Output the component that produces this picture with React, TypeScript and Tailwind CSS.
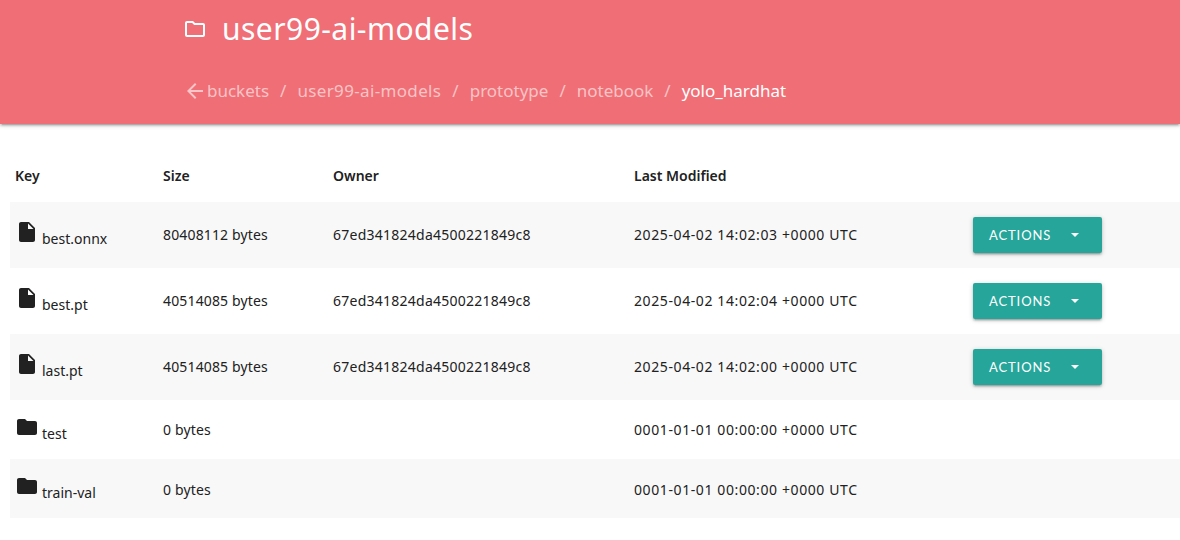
import React from "react";

const File = () => (
  <svg width="24" height="24" viewBox="0 0 24 24" className="fill-[#212121] shrink-0"><path d="M6 2c-1.1 0-2 .9-2 2v16c0 1.1.9 2 2 2h12c1.1 0 2-.9 2-2V8l-6-6H6zm7 7V3.5L18.5 9H13z" /></svg>
);
const Folder = () => (
  <svg width="24" height="24" viewBox="0 0 24 24" className="fill-[#212121] shrink-0"><path d="M10 4H4c-1.1 0-2 .9-2 2v12c0 1.1.9 2 2 2h16c1.1 0 2-.9 2-2V8c0-1.1-.9-2-2-2h-8l-2-2z" /></svg>
);
const FolderLine = () => (
  <svg width="24" height="24" viewBox="0 0 24 24" className="fill-white shrink-0"><path d="M9.17 6l2 2H20v10H4V6h5.17M10 4H4c-1.1 0-1.99.9-1.99 2L2 18c0 1.1.9 2 2 2h16c1.1 0 2-.9 2-2V8c0-1.1-.9-2-2-2h-8l-2-2z" /></svg>
);
const Back = () => (
  <svg width="24" height="24" viewBox="0 0 24 24" className="fill-white/60 shrink-0"><path d="M20 11H7.83l5.59-5.59L12 4l-8 8 8 8 1.41-1.41L7.83 13H20v-2z" /></svg>
);

const rows = [
  { name: "best.onnx", size: "80408112 bytes", owner: "67ed341824da4500221849c8", date: "2025-04-02 14:02:03 +0000 UTC", file: true, pad: "pb-[2px]" },
  { name: "best.pt", size: "40514085 bytes", owner: "67ed341824da4500221849c8", date: "2025-04-02 14:02:04 +0000 UTC", file: true, pad: "pb-[2px]" },
  { name: "last.pt", size: "40514085 bytes", owner: "67ed341824da4500221849c8", date: "2025-04-02 14:02:00 +0000 UTC", file: true, pad: "pb-[2px]" },
  { name: "test", size: "0 bytes", owner: "", date: "0001-01-01 00:00:00 +0000 UTC", file: false, pad: "" },
  { name: "train-val", size: "0 bytes", owner: "", date: "0001-01-01 00:00:00 +0000 UTC", file: false, pad: "pt-[1px]" },
];

export default function App() {
  return (
    <div className="w-[1180px] h-[540px] overflow-hidden bg-white text-[#212121] font-['Noto_Sans',sans-serif]">
      <header className="h-[124px] bg-[#f06e75] pl-[183px] shadow-[0_2px_2px_rgba(0,0,0,0.14),0_3px_1px_-2px_rgba(0,0,0,0.12),0_1px_5px_rgba(0,0,0,0.2)]">
        <div className="flex items-center h-[57px] text-white">
          <FolderLine />
          <span className="ml-[15px] text-[30px] tracking-[0.45px] leading-[57px]">user99-ai-models</span>
        </div>
        <nav className="flex items-center h-[67px] text-[17px] text-white/60">
          <Back />
          <span>buckets</span>
          <span className="mx-[11px]">/</span>
          <span className="tracking-[0.35px]">user99-ai-models</span>
          <span className="mx-[11px]">/</span>
          <span>prototype</span>
          <span className="mx-[11px]">/</span>
          <span>notebook</span>
          <span className="mx-[11px]">/</span>
          <span className="text-white">yolo_hardhat</span>
        </nav>
      </header>
      <div className="pl-[10px] pt-[21px]">
        <table className="w-[1170px] table-fixed border-collapse text-[14px]">
          <colgroup>
            <col className="w-[148px]" />
            <col className="w-[170px]" />
            <col className="w-[301px]" />
            <col className="w-[339px]" />
            <col />
          </colgroup>
          <thead>
            <tr className="h-[57px] text-left">
              <th className="pl-[5px] pt-[4px] font-semibold">Key</th>
              <th className="pl-[5px] pt-[4px] font-semibold">Size</th>
              <th className="pl-[5px] pt-[4px] font-semibold">Owner</th>
              <th className="pl-[5px] pt-[4px] font-semibold">Last Modified</th>
              <th />
            </tr>
          </thead>
          <tbody>
            {rows.map((r, i) => (
              <tr key={r.name} className={`${r.file ? "h-[66px]" : "h-[59px]"} ${i % 2 === 0 ? "bg-[#f8f8f8]" : "bg-white"}`}>
                <td className="pl-[5px]">
                  <div className="flex items-start pb-[1px]">
                    {r.file ? <File /> : <Folder />}
                    <span className="ml-[3px] mt-[9px] leading-[20px]">{r.name}</span>
                  </div>
                </td>
                <td className={`pl-[5px] tracking-[0.15px] ${r.pad}`}>{r.size}</td>
                <td className={`pl-[5px] tracking-[0.25px] ${r.pad}`}>{r.owner}</td>
                <td className={`pl-[5px] tracking-[0.6px] ${r.pad}`}>{r.date}</td>
                <td className="pl-[5px]">
                  {r.file && (
                    <button className="flex items-center w-[129px] h-[36px] pl-[16px] rounded-[2px] bg-[#26a69a] text-white text-[13px] tracking-[0.9px] font-['Lato',sans-serif] shadow-[0_2px_2px_rgba(0,0,0,0.14),0_3px_1px_-2px_rgba(0,0,0,0.12),0_1px_5px_rgba(0,0,0,0.2)]">
                      <span className="pt-[2px]">ACTIONS</span>
                      <span className="ml-[20px] w-0 h-0 border-x-[4.5px] border-x-transparent border-t-[4.5px] border-t-white" />
                    </button>
                  )}
                </td>
              </tr>
            ))}
          </tbody>
        </table>
      </div>
    </div>
  );
}
